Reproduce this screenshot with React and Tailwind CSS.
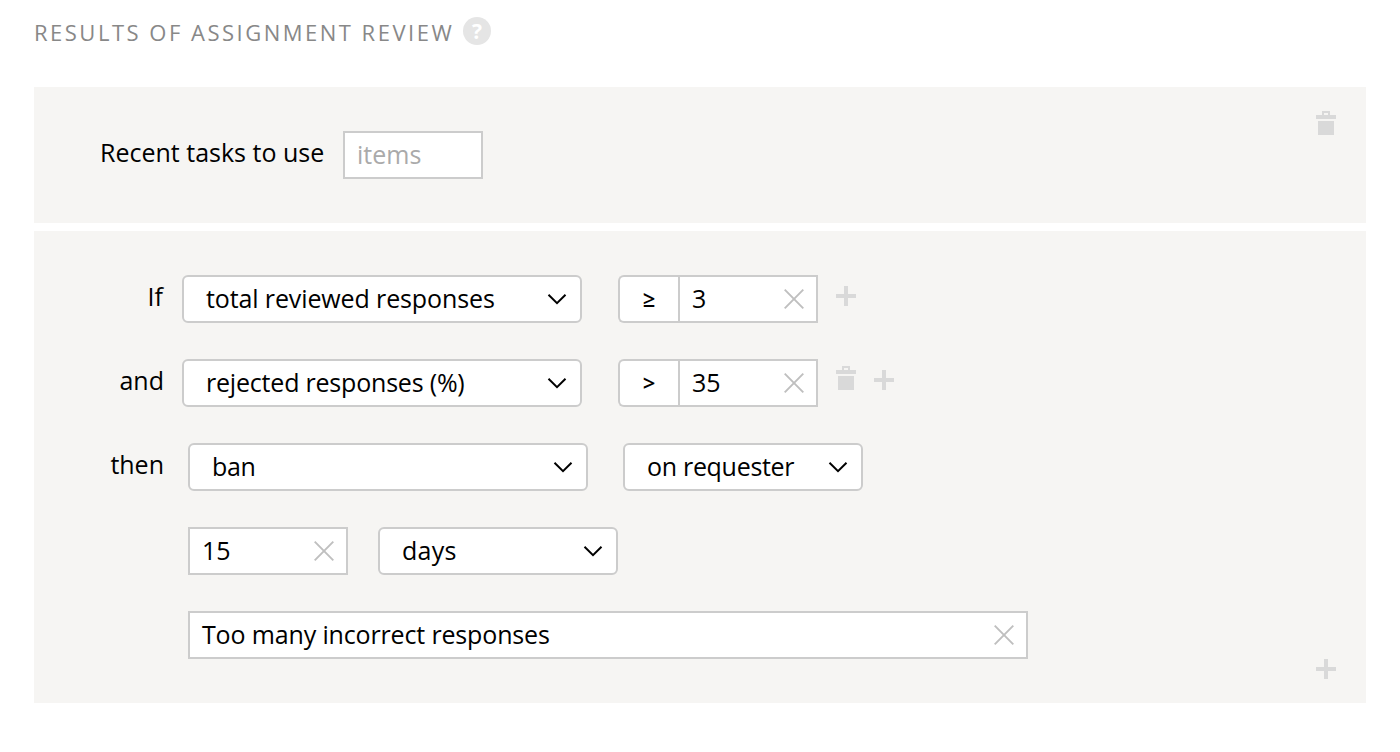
const Chevron = () => (
  <svg className="mt-px block shrink-0" width="20" height="12" viewBox="0 0 20 12" fill="none">
    <path d="M1.5 0.8 L10 9.2 L18.5 0.8" stroke="#000" strokeWidth="2" />
  </svg>
);

const Clear = () => (
  <svg className="block shrink-0" width="20" height="20" viewBox="0 0 20 20" fill="none">
    <path d="M0.7 0.7 L19.3 19.3 M19.3 0.7 L0.7 19.3" stroke="#bfbfbf" strokeWidth="1.9" />
  </svg>
);

const Plus = () => (
  <svg className="block shrink-0" width="20" height="20" viewBox="0 0 20 20" fill="#d9d9d9">
    <path d="M8 0h4v8h8v4h-8v8h-4v-8H0v-4h8z" />
  </svg>
);

const Trash = () => (
  <svg className="block shrink-0" width="20" height="24" viewBox="0 0 20 24" fill="#d9d9d9">
    <path d="M0 4h6V0h8v4h6v4H0z M8 2v2h4V2z M2 10h16v14H2z" fillRule="evenodd" />
  </svg>
);

const Label = ({ children, className = "" }) => (
  <div className={`flex h-11 items-center pb-0.5 whitespace-nowrap ${className}`}>{children}</div>
);

const Select = ({ children, className = "", textClass = "" }) => (
  <div
    className={`flex h-12 shrink-0 items-center justify-between rounded-[6px] border-2 border-[#ccc] bg-white pr-[13px] pl-[22px] ${className}`}
  >
    <span className={`pb-0.5 whitespace-nowrap ${textClass}`}>{children}</span>
    <Chevron />
  </div>
);

const Field = ({ children, className = "", textClass = "" }) => (
  <div
    className={`flex h-12 shrink-0 items-center justify-between border-2 border-[#ccc] bg-white pr-3 pl-3 ${className}`}
  >
    <span className={`pb-0.5 whitespace-nowrap ${textClass}`}>{children}</span>
    <Clear />
  </div>
);

const Operator = ({ children }) => (
  <div className="flex h-12 w-[60px] shrink-0 items-center justify-center rounded-l-[6px] border-2 border-r-0 border-[#ccc] bg-white pb-0.5 text-[22px] font-semibold">
    {children}
  </div>
);

export default function App() {
  return (
    <div className="flex h-[752px] w-[1400px] flex-col bg-white px-[34px] font-['Open_Sans',sans-serif] text-[25px] leading-[34px] font-[430] text-black">
      <header className="flex h-[87px] items-start pt-[17px]">
        <h1 className="w-[429px] text-[22px] leading-[30px] font-[420] tracking-[2.5px] whitespace-nowrap text-[#888]">
          RESULTS OF ASSIGNMENT REVIEW
        </h1>
        <span className="flex size-7 items-center justify-center rounded-full bg-[#e5e5e5] text-[21px] leading-7 font-bold text-white">
          ?
        </span>
      </header>

      <section className="flex h-[136px] items-start justify-between bg-[#f6f5f3] pt-6 pr-[30px]">
        <div className="flex pt-5 pl-[66px]">
          <Label className="w-[225px]">Recent tasks to use</Label>
          <div className="ml-[18px] flex h-12 w-[140px] items-center border-2 border-[#ccc] bg-white pb-0.5 pl-3 text-[#aaa]">
            items
          </div>
        </div>
        <Trash />
      </section>

      <section className="mt-2 flex h-[472px] items-end justify-between bg-[#f6f5f3] pr-[30px] pb-6">
        <div className="flex h-full flex-col gap-9 pt-11">
          <div className="flex">
            <Label className="mr-[19px] w-[129px] justify-end">If</Label>
            <Select className="w-[400px]" textClass="tracking-[-0.12px]">total reviewed responses</Select>
            <div className="ml-9 flex">
              <Operator>≥</Operator>
              <Field className="w-[140px]">3</Field>
            </div>
            <div className="ml-[18px] pt-[11px]">
              <Plus />
            </div>
          </div>
          <div className="flex">
            <Label className="mr-[18px] w-[130px] justify-end">and</Label>
            <Select className="w-[400px]" textClass="tracking-[-0.2px]">rejected responses (%)</Select>
            <div className="ml-9 flex">
              <Operator>&gt;</Operator>
              <Field className="w-[140px]">35</Field>
            </div>
            <div className="ml-[18px] flex items-start gap-[18px] pt-[7px]">
              <Trash />
              <div className="pt-1">
                <Plus />
              </div>
            </div>
          </div>
          <div className="flex">
            <Label className="mr-6 w-[130px] justify-end">then</Label>
            <Select className="w-[400px]" textClass="tracking-[-0.3px]">ban</Select>
            <Select className="ml-[35px] w-[240px]" textClass="tracking-[-0.3px]">on requester</Select>
          </div>
          <div className="flex gap-[30px] pl-[154px]">
            <Field className="w-[160px]">15</Field>
            <Select className="w-[240px]" textClass="tracking-[0.3px]">days</Select>
          </div>
          <div className="flex pl-[154px]">
            <Field className="w-[840px]" textClass="tracking-[-0.15px]">Too many incorrect responses</Field>
          </div>
        </div>
        <Plus />
      </section>
    </div>
  );
}
